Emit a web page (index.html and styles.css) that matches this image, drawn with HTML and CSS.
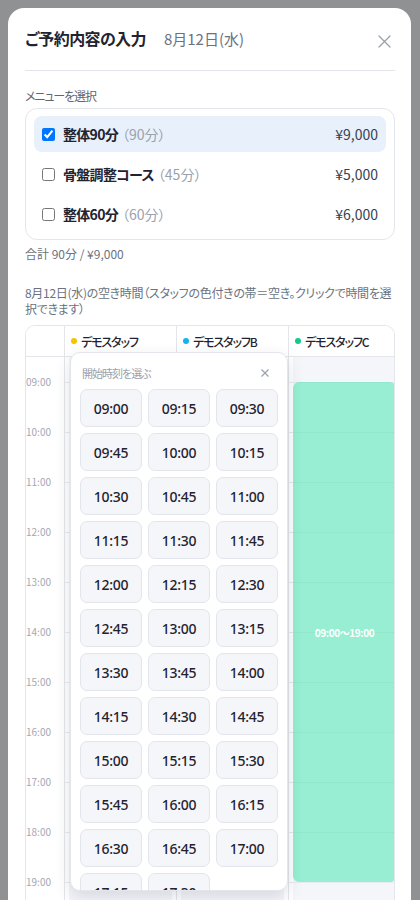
FILE: index.html
```html
<!DOCTYPE html>
<html lang="ja">
<head>
<meta charset="utf-8">
<title>ご予約内容の入力</title>
<link rel="stylesheet" href="styles.css">
</head>
<body>
<div class="modal">
  <div class="modal-head">
    <h1 class="title">ご予約内容の入力<span class="title-date">8月12日(水)</span></h1>
    <button class="close" aria-label="閉じる">
      <svg width="13" height="13" viewBox="0 0 13 13"><path d="M1 1L12 12M12 1L1 12" stroke="#9aa0ab" stroke-width="1.3" fill="none" stroke-linecap="round"/></svg>
    </button>
  </div>

  <div class="section-label">メニューを選択</div>
  <div class="menu-box">
    <label class="menu-row selected">
      <input type="checkbox" checked>
      <span class="menu-name">整体90分</span><span class="menu-dur">（90分）</span>
      <span class="menu-price">¥9,000</span>
    </label>
    <label class="menu-row">
      <input type="checkbox">
      <span class="menu-name">骨盤調整コース</span><span class="menu-dur">（45分）</span>
      <span class="menu-price">¥5,000</span>
    </label>
    <label class="menu-row">
      <input type="checkbox">
      <span class="menu-name">整体60分</span><span class="menu-dur">（60分）</span>
      <span class="menu-price">¥6,000</span>
    </label>
  </div>
  <div class="total">合計 90分 / ¥9,000</div>

  <div class="avail-note">8月12日(水)の空き時間（スタッフの色付きの帯＝空き。クリックで時間を選<br>択できます）</div>

  <div class="schedule">
    <div class="sched-grid">
      <div class="head-cell"></div>
      <div class="head-cell staff"><span class="dot dot-a"></span>デモスタッフ</div>
      <div class="head-cell staff"><span class="dot dot-b"></span>デモスタッフB</div>
      <div class="head-cell staff"><span class="dot dot-c"></span>デモスタッフC</div>

      <div class="time-col">
        <div class="tlabel">09:00</div>
        <div class="tlabel">10:00</div>
        <div class="tlabel">11:00</div>
        <div class="tlabel">12:00</div>
        <div class="tlabel">13:00</div>
        <div class="tlabel">14:00</div>
        <div class="tlabel">15:00</div>
        <div class="tlabel">16:00</div>
        <div class="tlabel">17:00</div>
        <div class="tlabel">18:00</div>
        <div class="tlabel">19:00</div>
      </div>
      <div class="staff-col">
        <div class="slot"></div><div class="slot"></div><div class="slot"></div><div class="slot"></div><div class="slot"></div><div class="slot"></div><div class="slot"></div><div class="slot"></div><div class="slot"></div><div class="slot"></div><div class="slot"></div>
      </div>
      <div class="staff-col">
        <div class="slot"></div><div class="slot"></div><div class="slot"></div><div class="slot"></div><div class="slot"></div><div class="slot"></div><div class="slot"></div><div class="slot"></div><div class="slot"></div><div class="slot"></div><div class="slot"></div>
      </div>
      <div class="staff-col">
        <div class="slot"></div><div class="slot"></div><div class="slot"></div><div class="slot"></div><div class="slot"></div><div class="slot"></div><div class="slot"></div><div class="slot"></div><div class="slot"></div><div class="slot"></div><div class="slot"></div>
        <div class="avail-block" style="top:25px;height:500px;"><span>09:00〜19:00</span></div>
      </div>
    </div>

    <div class="picker">
      <div class="picker-head">
        <span class="picker-title">開始時刻を選ぶ</span>
        <svg class="picker-close" width="8" height="8" viewBox="0 0 8 8"><path d="M0.5 0.5L7.5 7.5M7.5 0.5L0.5 7.5" stroke="#9aa0ab" stroke-width="1.2" fill="none"/></svg>
      </div>
      <div class="picker-grid">
        <button class="tbtn">09:00</button><button class="tbtn">09:15</button><button class="tbtn">09:30</button>
        <button class="tbtn">09:45</button><button class="tbtn">10:00</button><button class="tbtn">10:15</button>
        <button class="tbtn">10:30</button><button class="tbtn">10:45</button><button class="tbtn">11:00</button>
        <button class="tbtn">11:15</button><button class="tbtn">11:30</button><button class="tbtn">11:45</button>
        <button class="tbtn">12:00</button><button class="tbtn">12:15</button><button class="tbtn">12:30</button>
        <button class="tbtn">12:45</button><button class="tbtn">13:00</button><button class="tbtn">13:15</button>
        <button class="tbtn">13:30</button><button class="tbtn">13:45</button><button class="tbtn">14:00</button>
        <button class="tbtn">14:15</button><button class="tbtn">14:30</button><button class="tbtn">14:45</button>
        <button class="tbtn">15:00</button><button class="tbtn">15:15</button><button class="tbtn">15:30</button>
        <button class="tbtn">15:45</button><button class="tbtn">16:00</button><button class="tbtn">16:15</button>
        <button class="tbtn">16:30</button><button class="tbtn">16:45</button><button class="tbtn">17:00</button>
        <button class="tbtn">17:15</button><button class="tbtn">17:30</button>
      </div>
    </div>
  </div>
</div>
</body>
</html>
```
FILE: styles.css
```css
* { box-sizing: border-box; }
html, body { margin: 0; padding: 0; }
body {
  background: #8f9193;
  font-family: "Noto Sans CJK JP", "Noto Sans", sans-serif;
  font-feature-settings: "palt" 1;
  color: #1f2430;
  overflow: hidden;
  height: 900px;
}
.modal {
  margin: 8px 0 0 8px;
  width: 403px;
  background: #fff;
  border-radius: 16px 16px 0 0;
  padding: 0 16px 0 17px;
  min-height: 1000px;
}
.modal-head {
  display: flex;
  justify-content: space-between;
  align-items: flex-start;
  padding: 18px 0 19px;
  border-bottom: 1px solid #e3e5ea;
}
.title {
  margin: 0;
  font-size: 16px;
  line-height: 24px;
  font-weight: 700;
  letter-spacing: -0.6px;
  color: #1f2430;
}
.title-date {
  font-size: 15px;
  font-weight: 400;
  letter-spacing: 0;
  color: #6b7280;
  margin-left: 18px;
}
.close {
  border: 0;
  background: none;
  padding: 0;
  margin: 9px 4px 0 0;
  width: 13px;
  height: 13px;
  display: block;
}
.close svg { display: block; }
.section-label {
  margin-top: 17px;
  font-size: 12px;
  line-height: 16px;
  letter-spacing: -1.1px;
  color: #5f6673;
}
.menu-box {
  margin-top: 4px;
  border: 1px solid #e4e6eb;
  border-radius: 12px;
  padding: 7px 8px;
  display: flex;
  flex-direction: column;
  gap: 4px;
}
.menu-row {
  display: flex;
  align-items: center;
  height: 36px;
  padding: 0 8px;
  border-radius: 8px;
  font-size: 14px;
}
.menu-row.selected { background: #e8f0fb; }
.menu-row input {
  margin: 0 8px 0 0;
  width: 13px;
  height: 13px;
}
.menu-name { font-weight: 700; color: #1f2430; letter-spacing: -0.7px; }
.menu-dur { color: #9aa1ad; margin-left: 4px; }
.menu-price { margin-left: auto; color: #374151; }
.total {
  margin-top: 6px;
  font-size: 12px;
  line-height: 16px;
  color: #6b7280;
}
.avail-note {
  margin-top: 23px;
  font-size: 12px;
  line-height: 16px;
  letter-spacing: -0.3px;
  color: #6b7280;
}
.schedule {
  position: relative;
  margin-top: 8px;
}
.sched-grid {
  border: 1px solid #e4e6eb;
  border-radius: 10px 10px 0 0;
  overflow: hidden;
  display: grid;
  grid-template-columns: 39px 112px 112px 112px;
  background: #fff;
}
.head-cell {
  height: 31px;
  border-right: 1px solid #e4e6eb;
  border-bottom: 1px solid #e4e6eb;
  background: #fff;
}
.head-cell.staff {
  display: flex;
  align-items: center;
  padding-left: 6px;
  font-size: 12px;
  font-weight: 500;
  letter-spacing: -1.1px;
  color: #1f2430;
}
.dot {
  width: 6px;
  height: 6px;
  border-radius: 50%;
  margin-right: 4px;
  flex: none;
}
.dot-a { background: #f5c400; }
.dot-b { background: #12b3f2; }
.dot-c { background: #11c98b; }
.time-col {
  border-right: 1px solid #e4e6eb;
  padding-top: 18px;
}
.tlabel {
  height: 50px;
  font-size: 10px;
  line-height: 14px;
  color: #a6a6b6;
}
.staff-col {
  position: relative;
  border-right: 1px solid #e4e6eb;
  padding-top: 25px;
  background: linear-gradient(#f5f6fa, #f5f6fa) 4px 0 / calc(100% - 8px) 100% no-repeat, #fff;
}
.slot {
  height: 50px;
  border-top: 1px solid #e8eaef;
}
.avail-block {
  position: absolute;
  left: 4px;
  right: 4px;
  background: rgba(22, 226, 154, 0.42);
  border-radius: 6px;
  display: flex;
  align-items: center;
  justify-content: center;
}
.avail-block span {
  color: #fff;
  font-size: 10px;
  font-weight: 700;
  letter-spacing: -0.4px;
}
.picker {
  position: absolute;
  left: 45px;
  top: 27px;
  width: 218px;
  height: 539px;
  overflow: hidden;
  background: #fff;
  border: 1px solid #e4e6eb;
  border-radius: 10px;
  box-shadow: 0 6px 16px rgba(30, 40, 60, 0.14);
  padding: 12px 9px 0;
}
.picker-head {
  display: flex;
  justify-content: space-between;
  align-items: center;
  height: 16px;
  padding: 0 9px 0 2px;
}
.picker-title {
  font-size: 11px;
  letter-spacing: -1px;
  color: #9aa0ab;
}
.picker-close { display: block; }
.picker-grid {
  margin-top: 8px;
  display: grid;
  grid-template-columns: repeat(3, 62px);
  gap: 6px;
}
.tbtn {
  height: 38px;
  border: 1px solid #e2e5eb;
  border-radius: 7px;
  background: #f5f6fa;
  font-family: "Noto Sans", "Noto Sans CJK JP", sans-serif;
  font-size: 14px;
  font-weight: 500;
  letter-spacing: -0.3px;
  color: #1f2430;
  padding: 0;
}
```
